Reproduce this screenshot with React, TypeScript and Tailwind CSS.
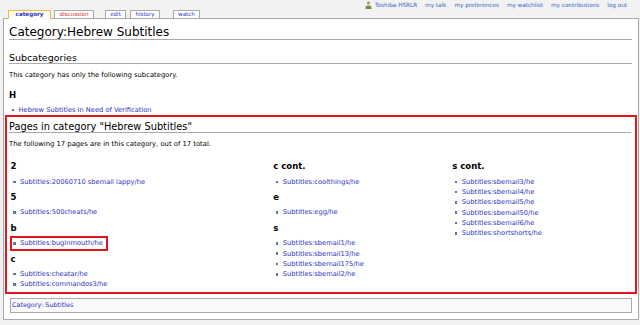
const link = 'text-[#2a33c4]';

type Group = { h: string; items: string[]; mark?: boolean };

const columns: Group[][] = [
  [
    { h: '2', items: ['Subtitles:20060710 sbemail lappy/he'] },
    { h: '5', items: ['Subtitles:500cheats/he'] },
    { h: 'b', items: ['Subtitles:buginmouth/he'], mark: true },
    { h: 'c', items: ['Subtitles:cheatar/he', 'Subtitles:commandos3/he'] }
  ],
  [
    { h: 'c cont.', items: ['Subtitles:coolthings/he'] },
    { h: 'e', items: ['Subtitles:egg/he'] },
    {
      h: 's',
      items: ['Subtitles:sbemail1/he', 'Subtitles:sbemail13/he', 'Subtitles:sbemail175/he', 'Subtitles:sbemail2/he']
    }
  ],
  [
    {
      h: 's cont.',
      items: [
        'Subtitles:sbemail3/he',
        'Subtitles:sbemail4/he',
        'Subtitles:sbemail5/he',
        'Subtitles:sbemail50/he',
        'Subtitles:sbemail6/he',
        'Subtitles:shortshorts/he'
      ]
    }
  ]
];

function Bullet() {
  return <span className="ml-[2.5px] mr-[4.5px] h-[2.5px] w-[2.5px] shrink-0 bg-[#5b7a99]" />;
}

function Item({ label }: { label: string }) {
  return (
    <li className="flex h-[10.3px] items-center whitespace-nowrap text-[6.7px] leading-[10.3px]">
      <Bullet />
      <span className={link}>{label}</span>
    </li>
  );
}

function UserIcon() {
  return (
    <svg width="7" height="8" viewBox="0 0 7 8" className="mr-[3px]">
      <circle cx="3.5" cy="2" r="1.7" fill="#c9a064" />
      <path d="M0.5 8 L0.8 5.2 Q3.5 3.6 6.2 5.2 L6.5 8 Z" fill="#6b8f3e" />
    </svg>
  );
}

const tabs = [
  { label: 'category', w: 'w-[43px]', ml: '', active: true, color: 'text-[#2a33c4]' },
  { label: 'discussion', w: 'w-[40px]', ml: 'ml-[3px]', active: false, color: 'text-[#cc2a2a]' },
  { label: 'edit', w: 'w-[21px]', ml: 'ml-[11px]', active: false, color: 'text-[#2a33c4]' },
  { label: 'history', w: 'w-[30px]', ml: 'ml-[4px]', active: false, color: 'text-[#2a33c4]' },
  { label: 'watch', w: 'w-[27px]', ml: 'ml-[13px]', active: false, color: 'text-[#2a33c4]' }
];

const personal = ['my talk', 'my preferences', 'my watchlist', 'my contributions', 'log out'];

export default function App() {
  return (
    <div className="h-[325px] w-[640px] overflow-hidden bg-[#f2f2f2] font-['DejaVu_Sans',sans-serif] text-black">
      <div className="flex h-[18px] justify-between">
        <div className="flex h-full items-end pl-[8px]">
          {tabs.map((t) =>
            t.active ? (
              <div
                key={t.label}
                className={`relative z-10 -mb-px flex h-[9px] items-center justify-center border-x border-t border-[#fabd23] bg-white pb-px text-[5.6px] font-bold leading-[7px] ${t.w} ${t.color}`}
              >
                {t.label}
              </div>
            ) : (
              <div
                key={t.label}
                className={`flex h-[8px] items-center justify-center border-x border-t border-[#aaaaaa] bg-white text-[5.6px] leading-[7px] ${t.w} ${t.ml} ${t.color}`}
              >
                {t.label}
              </div>
            )
          )}
        </div>
        <div className="flex h-[10px] items-center pr-[13px] text-[5.7px] text-[#3566c4]">
          <UserIcon />
          <span>Toshiba HSRLR</span>
          {personal.map((p) => (
            <span key={p} className="ml-[8px]">
              {p}
            </span>
          ))}
        </div>
      </div>

      <div className="ml-[3px] mr-[1px] h-[302px] border border-[#aaaaaa] bg-white">
        <h1 className="ml-[5px] mr-[6px] mt-[6px] h-[15px] border-b border-[#aaaaaa] text-[12px] leading-[14px]">
          Category:Hebrew Subtitles
        </h1>
        <h2 className="ml-[5px] mr-[6px] mt-[12px] h-[12px] border-b border-[#aaaaaa] text-[9.5px] leading-[11px]">
          Subcategories
        </h2>
        <p className="ml-[5px] mt-[6.5px] text-[6.8px] leading-[9px]">This category has only the following subcategory.</p>
        <h3 className="ml-[5px] mt-[10.5px] h-[10px] text-[8.5px] font-bold leading-[10px]">H</h3>
        <ul className="ml-[5px] mt-[4.85px]">
          <Item label="Hebrew Subtitles in Need of Verification" />
        </ul>

        <div className="mx-[1px] h-[179px] border-2 border-[#e3151d] pl-[2px] pr-[4px]">
          <h2 className="mt-[3.5px] h-[12px] border-b border-[#aaaaaa] text-[9.8px] leading-[11px]">
            Pages in category &quot;Hebrew Subtitles&quot;
          </h2>
          <p className="mt-[7px] text-[6.8px] leading-[9px]">
            The following 17 pages are in this category, out of 17 total.
          </p>
          <div className="ml-[1.6px] mt-[12.5px] grid grid-cols-[262.7px_179px_1fr]">
            {columns.map((col, ci) => (
              <div key={ci}>
                {col.map((g, gi) => (
                  <div key={g.h} className={gi ? 'mt-[5px]' : ''}>
                    <h3 className="h-[10px] text-[8.5px] font-bold leading-[10px]">{g.h}</h3>
                    <ul className="mt-[5.5px]">
                      {g.items.map((it) =>
                        g.mark ? (
                          <li key={it} className="flex h-[10.3px] items-center">
                            <div className="-my-[2.35px] -ml-[0.6px] flex h-[15px] items-center border-2 border-[#e3151d] pr-[3px] text-[6.7px] whitespace-nowrap">
                              <span className="ml-[1.1px] mr-[4.5px] h-[2.5px] w-[2.5px] shrink-0 bg-[#5b7a99]" />
                              <span className={link}>{it}</span>
                            </div>
                          </li>
                        ) : (
                          <Item key={it} label={it} />
                        )
                      )}
                    </ul>
                  </div>
                ))}
              </div>
            ))}
          </div>
        </div>

        <div className="mx-[6px] mt-[4px] flex h-[15px] items-center border border-[#aaaaaa] bg-[#f9f9f9] pl-[1px] text-[6.4px]">
          <span className={link}>Category</span>
          <span className={link}>:</span>
          <span className={`ml-[2px] ${link}`}>Subtitles</span>
        </div>
      </div>
    </div>
  );
}
